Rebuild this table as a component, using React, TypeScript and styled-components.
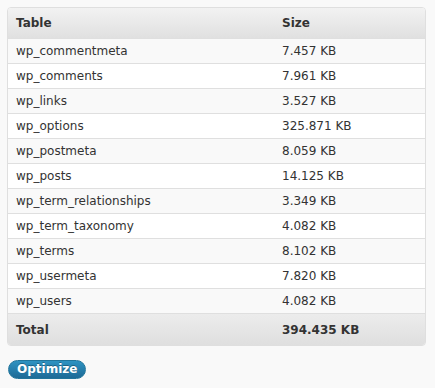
import React from 'react';
import styled, { createGlobalStyle } from 'styled-components';

interface ITableRow {
  name: string;
  size: string;
}

const GlobalStyle = createGlobalStyle`
  html, body {
    margin: 0;
    padding: 0;
    background: #f9f9f9;
  }
  body {
    font-family: 'DejaVu Sans', Verdana, sans-serif;
    color: #333;
  }
`;

const Page = styled.div`
  width: 428px;
  min-height: 388px;
  padding: 7px 0 0 7px;
  box-sizing: border-box;
  background: #f9f9f9;
`;

const Table = styled.table`
  width: 419px;
  border-collapse: separate;
  border-spacing: 0;
  border: 1px solid #dfdfdf;
  border-radius: 4px;
  overflow: hidden;
  font-size: 12px;
  background: #fff;
`;

const HeadCell = styled.th`
  height: 30px;
  padding: 0 8px;
  text-align: left;
  font-weight: bold;
  color: #333;
  background: linear-gradient(to bottom, #f2f2f2, #e0e0e0);
  border-bottom: 1px solid #dfdfdf;
`;

const FootCell = styled.th`
  height: 31px;
  padding: 0 8px;
  text-align: left;
  font-weight: bold;
  color: #333;
  background: linear-gradient(to bottom, #ececec, #dfdfdf);
`;

const Row = styled.tr<{ $odd: boolean }>`
  background: ${(p) => (p.$odd ? '#f9f9f9' : '#fff')};
`;

const Cell = styled.td`
  height: 24px;
  padding: 0 8px;
  color: #333;
  border-bottom: 1px solid #dfdfdf;
`;

const Actions = styled.div`
  padding: 12px 0 0 1px;
`;

const Button = styled.button`
  height: 19px;
  padding: 0 8px;
  border: 1px solid #21759b;
  border-radius: 10px;
  background: linear-gradient(to bottom, #2e93c2, #1e6a96);
  color: #fff;
  font-family: 'DejaVu Sans', Verdana, sans-serif;
  font-size: 12px;
  font-weight: bold;
  line-height: 17px;
  text-shadow: 0 -1px 0 rgba(0, 0, 0, 0.3);
  cursor: pointer;
`;

const rows: ITableRow[] = [
  { name: 'wp_commentmeta', size: '7.457 KB' },
  { name: 'wp_comments', size: '7.961 KB' },
  { name: 'wp_links', size: '3.527 KB' },
  { name: 'wp_options', size: '325.871 KB' },
  { name: 'wp_postmeta', size: '8.059 KB' },
  { name: 'wp_posts', size: '14.125 KB' },
  { name: 'wp_term_relationships', size: '3.349 KB' },
  { name: 'wp_term_taxonomy', size: '4.082 KB' },
  { name: 'wp_terms', size: '8.102 KB' },
  { name: 'wp_usermeta', size: '7.820 KB' },
  { name: 'wp_users', size: '4.082 KB' },
];

export default function App() {
  return (
    <Page>
      <GlobalStyle />
      <Table>
        <colgroup>
          <col style={{ width: 266 }} />
          <col />
        </colgroup>
        <thead>
          <tr>
            <HeadCell>Table</HeadCell>
            <HeadCell>Size</HeadCell>
          </tr>
        </thead>
        <tbody>
          {rows.map((row, i) => (
            <Row key={row.name} $odd={i % 2 === 0}>
              <Cell>{row.name}</Cell>
              <Cell>{row.size}</Cell>
            </Row>
          ))}
        </tbody>
        <tfoot>
          <tr>
            <FootCell>Total</FootCell>
            <FootCell>394.435 KB</FootCell>
          </tr>
        </tfoot>
      </Table>
      <Actions>
        <Button>Optimize</Button>
      </Actions>
    </Page>
  );
}
